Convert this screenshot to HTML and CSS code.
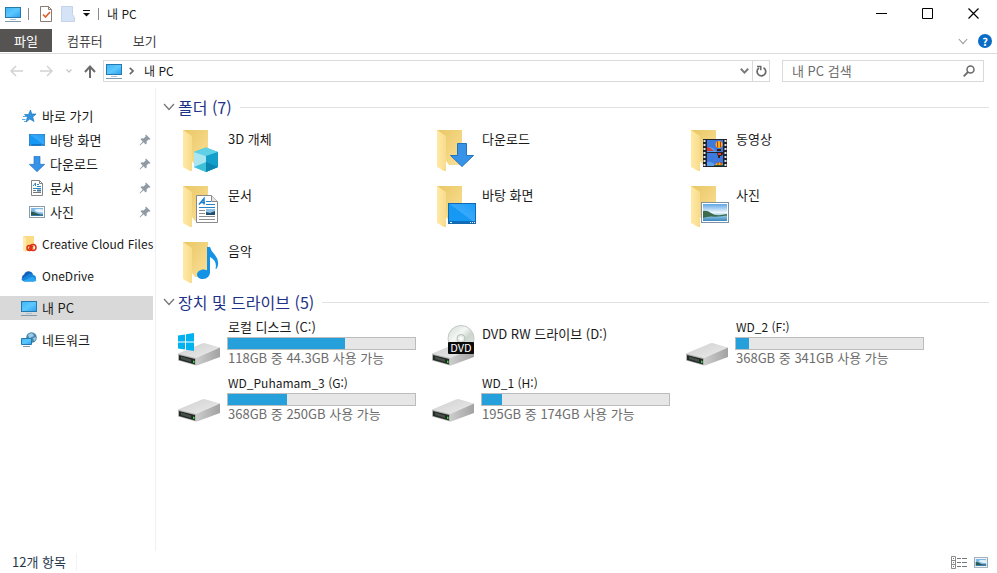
FILE: index.html
```html
<!DOCTYPE html>
<html lang="ko">
  <head>
    <meta charset="UTF-8" />
    <meta name="viewport" content="width=device-width, initial-scale=1.0" />
    <title>내 PC</title>
    <link rel="stylesheet" href="styles.css" />
  </head>
  <body>
    <!-- shared icons -->
    <svg class="sprite" aria-hidden="true">
      <defs>
        <linearGradient id="g-back" x1="0" y1="0" x2="1" y2="1">
          <stop offset="0" stop-color="#e9c765" />
          <stop offset="1" stop-color="#fbe097" />
        </linearGradient>
        <linearGradient id="g-flap" x1="0" y1="0" x2="1" y2="0">
          <stop offset="0" stop-color="#ffe9a6" />
          <stop offset="1" stop-color="#f8dc8c" />
        </linearGradient>
        <linearGradient id="g-screen" x1="0" y1="0" x2="1" y2="1">
          <stop offset="0" stop-color="#3fb4f5" />
          <stop offset="0.5" stop-color="#5cc8ff" />
          <stop offset="1" stop-color="#2ba0ee" />
        </linearGradient>
        <linearGradient id="g-desk" x1="0" y1="1" x2="1" y2="0">
          <stop offset="0" stop-color="#1698f5" />
          <stop offset="0.5" stop-color="#1698f5" />
          <stop offset="0.52" stop-color="#38a9fa" />
          <stop offset="1" stop-color="#1b9df8" />
        </linearGradient>
        <linearGradient id="g-sky" x1="0" y1="0" x2="0" y2="1">
          <stop offset="0" stop-color="#5fa6e6" />
          <stop offset="0.5" stop-color="#eef7fc" />
          <stop offset="0.7" stop-color="#8cc4e2" />
          <stop offset="1" stop-color="#3a86bd" />
        </linearGradient>
        <linearGradient id="g-top" x1="0" y1="0" x2="1" y2="1">
          <stop offset="0" stop-color="#cfcfcf" />
          <stop offset="1" stop-color="#ececec" />
        </linearGradient>
        <linearGradient id="g-side" x1="0" y1="0" x2="1" y2="0">
          <stop offset="0" stop-color="#cdcdcd" />
          <stop offset="1" stop-color="#a2a2a2" />
        </linearGradient>
        <linearGradient id="g-disc" x1="0" y1="0" x2="1" y2="1">
          <stop offset="0" stop-color="#d4dad5" />
          <stop offset="0.4" stop-color="#f4f7f4" />
          <stop offset="0.6" stop-color="#ccd5ce" />
          <stop offset="1" stop-color="#e5e9e6" />
        </linearGradient>
      </defs>
      <symbol id="pc" viewBox="0 0 16 16">
        <rect x="0.5" y="1.5" width="15" height="10" fill="url(#g-screen)" stroke="#2779ad" />
        <path d="M5 13.5h6" stroke="#a9c4d6" />
        <path d="M0 15.5h16" stroke="#7f99aa" />
      </symbol>
      <symbol id="folder" viewBox="0 0 48 48">
        <path d="M7 4h25v35H16z" fill="url(#g-back)" />
        <path d="M7 4l9 6v35l-2 0-7-4z" fill="url(#g-flap)" />
        <path d="M16 35l3 4h-3z" fill="#fff" />
      </symbol>
      <symbol id="drive" viewBox="0 0 48 48">
        <path d="M2 32.500L26 22.500Q28 21.500 30 22.500L44 26.500 20 37z" fill="url(#g-top)" />
        <path d="M20 37L44 26.500v9.500L21 44.500h-1z" fill="url(#g-side)" />
        <path d="M2 32.500l18 4.500v7.500L2 39.500z" fill="#b4b4b4" />
        <path d="M3 34l16 4v5.500L3 39z" fill="#232a26" />
        <path d="M5 35.500l10 3v2.500L5 38z" fill="#465049" />
        <path d="M17 39.500l1.500 .4v2.300l-1.500-.4z" fill="#3fd94a" />
      </symbol>
      <symbol id="arrow" viewBox="0 0 24 24">
        <path d="M7.500 .5h9v12h7L12 23.500.5 12.500h7z" fill="#3793e8" stroke="#2373bd" />
      </symbol>
      <symbol id="desk" viewBox="0 0 28 21">
        <rect x="0.500" y="0.500" width="27" height="20" fill="url(#g-desk)" stroke="#1269b0" />
        <path d="M1 19h26" stroke="#0e6ebb" stroke-width="2" />
        <path d="M2 19.500h2M22 19.500h1M24 19.500h1M26 19.500h1" stroke="#fff" />
      </symbol>
      <symbol id="photo" viewBox="0 0 28 21">
        <rect x="0.500" y="0.500" width="27" height="20" fill="#fff" stroke="#7d93a5" />
        <path d="M2 2h24v17H2z" fill="url(#g-sky)" />
        <path d="M2 9q4-1 8 2t10 2q4-.5 6-1v1.500q-8 1.500-16 1-5 0-8 1.500z" fill="#3a6b4b" />
      </symbol>
      <symbol id="photo-small" viewBox="0 0 16 12">
        <rect x="0.500" y="0.500" width="15" height="11" fill="#fff" stroke="#8a9bab" />
        <path d="M2 2h12v8H2z" fill="#7fb9e6" />
        <path d="M6 3.500q4-1 8 0v3q-5 0-8-1.500z" fill="#e8f4fb" />
        <path d="M2 5.500q3 0 5 1.500t7 1v.5q-4 .5-12 .5z" fill="#2c5a4e" />
        <path d="M2 9h12v1H2z" fill="#2f75a8" />
      </symbol>
      <symbol id="doc" viewBox="0 0 22 28">
        <path d="M.5 .5h15l6 6v21H.5z" fill="#fff" stroke="#8a8a8a" />
        <path d="M15.500 .5v6h6" fill="#e8e8e8" stroke="#8a8a8a" />
        <path d="M3 9.500l5-6v6M5 7.500h4" fill="none" stroke="#1b7fd0" stroke-width="1.500" />
        <path d="M10 6.500h5M10 9.500h9M3 12.500h16" stroke="#2b83c6" />
        <path d="M3 15.500h6M3 18.500h6M3 21.500h16M3 24.500h16" stroke="#8b8f93" />
        <path d="M10 14h9v6h-9z" fill="#8fc2e6" />
        <path d="M10 17l4 1 5-2v4h-9z" fill="#234f6c" />
      </symbol>
      <symbol id="pin" viewBox="0 0 12 12">
        <path d="M7 .5l4.500 4.500-1 .7-1-.3L7.500 7.500l.2 2-1 1L4.500 8.300 1 11.500.5 11l3.200-3.500L1.500 5.300l1-1 2 .2L6.700 2.400l-.4-1z" fill="#8f9aa5" />
      </symbol>
      <symbol id="chevron" viewBox="0 0 12 8">
        <path d="M1 1l5 5.500L11 1" fill="none" stroke="currentColor" stroke-width="1.300" />
      </symbol>
    </svg>

    <div class="window">
      <header class="titlebar">
        <svg class="icon16"><use href="#pc" /></svg>
        <span class="divider"></span>
        <div class="quick-tools">
          <button type="button" aria-label="속성">
            <svg width="14" height="16" viewBox="0 0 14 16">
              <path d="M1.500 .5h8l3 3v12h-11z" fill="#fff" stroke="#8b7b72" />
              <path d="M9.500 .5v3h3" fill="none" stroke="#8b7b72" />
              <path d="M4 8.500l2.500 2.500 4.500-5" fill="none" stroke="#e0622a" stroke-width="1.700" />
            </svg>
          </button>
          <button type="button" aria-label="새 폴더">
            <svg width="14" height="16" viewBox="0 0 14 16">
              <path d="M.5 .5h11v8l2 3v4H.5z" fill="#d5e3f7" stroke="#c4d3ea" />
            </svg>
          </button>
          <button type="button" class="customize" aria-label="빠른 실행 도구 모음 사용자 지정">
            <svg width="7" height="7" viewBox="0 0 7 7">
              <path d="M0 .5h7" stroke="#111" />
              <path d="M0 3h7L3.500 6.500z" fill="#111" />
            </svg>
          </button>
        </div>
        <span class="divider"></span>
        <h1>내 PC</h1>
        <div class="window-buttons">
          <button type="button" aria-label="최소화">
            <svg width="11" height="11"><path d="M0 5.500h11" stroke="#000" /></svg>
          </button>
          <button type="button" aria-label="최대화">
            <svg width="11" height="11"><path d="M.5 .5h10v10H.5z" fill="none" stroke="#000" /></svg>
          </button>
          <button type="button" aria-label="닫기">
            <svg width="11" height="11"><path d="M.5 .5l10 10M10.500 .5l-10 10" stroke="#000" stroke-width="1.200" /></svg>
          </button>
        </div>
      </header>

      <nav class="ribbon">
        <button type="button" class="tab file">파일</button>
        <button type="button" class="tab">컴퓨터</button>
        <button type="button" class="tab">보기</button>
        <div class="ribbon-end">
          <button type="button" aria-label="리본 확장">
            <svg class="expand"><use href="#chevron" /></svg>
          </button>
          <button type="button" class="help" aria-label="도움말">?</button>
        </div>
      </nav>

      <div class="toolbar">
        <div class="history">
          <button type="button" aria-label="뒤로" disabled>
            <svg width="13" height="12" viewBox="0 0 13 12"><path d="M13 6H1.500M6 1L1 6l5 5" fill="none" stroke="#d2d2d2" stroke-width="1.500" /></svg>
          </button>
          <button type="button" aria-label="앞으로" disabled>
            <svg width="13" height="12" viewBox="0 0 13 12"><path d="M0 6h11.500M7 1l5 5-5 5" fill="none" stroke="#d2d2d2" stroke-width="1.500" /></svg>
          </button>
          <button type="button" class="recent" aria-label="최근 위치" disabled>
            <svg width="6" height="4" viewBox="0 0 6 4"><path d="M.5 .5L3 3 5.500 .5" fill="none" stroke="#c8c8c8" stroke-width="1.300" /></svg>
          </button>
          <button type="button" aria-label="위로">
            <svg width="12" height="13" viewBox="0 0 12 13"><path d="M6 13V2M1 7l5-5.500L11 7" fill="none" stroke="#6b6b6b" stroke-width="2" /></svg>
          </button>
        </div>
        <div class="address">
          <svg class="icon16"><use href="#pc" /></svg>
          <svg width="5" height="8" viewBox="0 0 5 8"><path d="M.8 .8L4 4 .8 7.200" fill="none" stroke="#6a6a6a" stroke-width="1.700" /></svg>
          <button type="button" class="crumb">내 PC</button>
          <button type="button" class="drop" aria-label="이전 위치">
            <svg width="9" height="6" viewBox="0 0 9 6"><path d="M.8 .8L4.500 4.600 8.200 .8" fill="none" stroke="#7a7a7a" stroke-width="2" /></svg>
          </button>
          <button type="button" class="refresh" aria-label="새로 고침">
            <svg width="11" height="12" viewBox="0 0 11 12">
              <path d="M7.500 2.800A4.300 4.300 0 1 1 3 3" fill="none" stroke="#6a6a6a" stroke-width="1.700" />
              <path d="M1 1.500h3.800v3.800" fill="none" stroke="#6a6a6a" stroke-width="1.500" />
            </svg>
          </button>
        </div>
        <form class="search">
          <input type="text" aria-label="내 PC 검색" placeholder="내 PC 검색" />
          <button type="button" aria-label="검색">
            <svg width="12" height="12" viewBox="0 0 12 12">
              <circle cx="7.500" cy="4.500" r="3.500" fill="none" stroke="#6a6a6a" stroke-width="1.500" />
              <path d="M5 7L.7 11.300" stroke="#6a6a6a" stroke-width="1.800" />
            </svg>
          </button>
        </form>
      </div>

      <div class="body">
        <aside class="sidebar">
          <ul>
            <li>
              <a href="#">
                <svg class="icon16" viewBox="0 0 16 16">
                  <path d="M9.500 2l1.200 4H15l-3.300 3 1.300 4.500-4.200-2.500L5 14l1.300-4.500L3.500 6.500h4z" fill="#2f93e0" stroke="#2178bd" stroke-width=".7" />
                  <path d="M2 8.500h3.500M1 11.500h3.500M3 13.500h2" stroke="#55a9e6" />
                </svg>
                바로 가기
              </a>
            </li>
            <li class="child">
              <a href="#"><svg class="icon16"><use href="#desk" /></svg>바탕 화면<svg class="pin"><use href="#pin" /></svg></a>
            </li>
            <li class="child">
              <a href="#"><svg class="icon16"><use href="#arrow" /></svg>다운로드<svg class="pin"><use href="#pin" /></svg></a>
            </li>
            <li class="child">
              <a href="#">
                <svg class="icon16" viewBox="0 0 16 16">
                  <path d="M2.500 .5h8l3 3v12h-11z" fill="#fff" stroke="#858585" />
                  <path d="M10.500 .5v3h3" fill="none" stroke="#858585" />
                  <path d="M4 6l2.500-3v3M8 4.500h2M8 6.500h4M4 8.500h8" fill="none" stroke="#2b83c6" />
                  <path d="M4 10.500h3M4 12.500h8" stroke="#777" />
                  <path d="M8 9.500h4v2H8z" fill="#3f7aa5" />
                </svg>
                문서<svg class="pin"><use href="#pin" /></svg>
              </a>
            </li>
            <li class="child">
              <a href="#"><svg class="icon16"><use href="#photo-small" /></svg>사진<svg class="pin"><use href="#pin" /></svg></a>
            </li>
          </ul>
          <ul>
            <li>
              <a href="#" class="latin">
                <svg class="icon16" viewBox="0 0 16 16">
                  <path d="M2 0h11v15H2z" fill="#fbdb84" />
                  <path d="M2 0l3 2v14l-3-1z" fill="#ffe9ad" />
                  <circle cx="8.500" cy="12" r="2.500" fill="none" stroke="#e02f1b" stroke-width="1.500" />
                  <circle cx="12" cy="11.500" r="3" fill="none" stroke="#e02f1b" stroke-width="1.500" />
                  <path d="M7 13.800l5-3.800" stroke="#e02f1b" stroke-width="1.200" />
                </svg>
                Creative Cloud Files
              </a>
            </li>
          </ul>
          <ul>
            <li>
              <a href="#" class="latin">
                <svg class="icon16" viewBox="0 0 16 16">
                  <path d="M3.500 13a3.400 3.400 0 0 1-.3-6.500A4.800 4.800 0 0 1 12 6z" fill="#0f62ba" />
                  <path d="M3.500 13.500Q1 13 .3 11l7-4.500Q10 4.500 12.500 7a3.400 3.400 0 0 1 .3 6.500z" fill="#1684dc" />
                  <path d="M2 13l9.500-4.500 4 3.500q-.8 1.500-2.500 1.500H3.500z" fill="#2aa5ef" />
                </svg>
                OneDrive
              </a>
            </li>
          </ul>
          <ul>
            <li class="current">
              <a href="#"><svg class="icon16"><use href="#pc" /></svg>내 PC</a>
            </li>
          </ul>
          <ul>
            <li>
              <a href="#">
                <svg class="icon16" viewBox="0 0 16 16">
                  <circle cx="10.500" cy="5.500" r="5.300" fill="#4a86ae" />
                  <path d="M7 3q3-3 5-1t-1 3-2 3zM12 6l3-1q0 3-2 4z" fill="#9dcbe3" />
                  <path d="M.5 6.500h10v6H.5z" fill="url(#g-screen)" stroke="#2779ad" />
                  <path d="M2 14.500h7" stroke="#7f99aa" />
                </svg>
                네트워크
              </a>
            </li>
          </ul>
        </aside>

        <main class="content">
          <section>
            <h2><svg class="fold"><use href="#chevron" /></svg>폴더 (7)</h2>
            <ul class="tiles">
              <li class="tile">
                <svg class="icon48" viewBox="0 0 48 48">
                  <use href="#folder" />
                  <path d="M30 21.500L42 26v15l-12 5-12-5V26z" fill="#2cb8d9" />
                  <path d="M30 21.500L42 26l-12 4-12-4z" fill="#5fd0e6" />
                  <path d="M18 26l12 4v16l-12-5z" fill="#a9e6f0" />
                  <path d="M18 41l12-5v10z" fill="#3cc0d8" />
                  <path d="M30 30l12-4v15l-12 5z" fill="#139fca" />
                  <path d="M30 36l12 5-12 5z" fill="#0b86b1" />
                </svg>
                <div class="info"><a href="#">3D 개체</a></div>
              </li>
              <li class="tile">
                <svg class="icon48" viewBox="0 0 48 48">
                  <use href="#folder" />
                  <use href="#arrow" x="20" y="17" width="24" height="24" />
                </svg>
                <div class="info"><a href="#">다운로드</a></div>
              </li>
              <li class="tile">
                <svg class="icon48" viewBox="0 0 48 48">
                  <use href="#folder" />
                  <path d="M19 13h24v28H19z" fill="#20232c" />
                  <path d="M20.500 14v27M41.500 14v27" stroke="#e4e4e4" stroke-width="2" stroke-dasharray="2 2" />
                  <path d="M23 14h16v12H23zM23 27h16v13H23z" fill="#3d78dc" />
                  <path d="M23 22q5-2 8 2l2 2H23zM23 36q5-1 9 4h-9z" fill="#5aa0ed" />
                  <path d="M23 21l3 1 4 3h-7z" fill="#d5382e" />
                  <path d="M30 39h9v1h-9z" fill="#265936" />
                  <circle cx="35" cy="18.500" r="3.500" fill="#f1b41c" />
                  <path d="M33.500 15.500v6M36.500 15.500v6" stroke="#c23427" />
                  <path d="M33 23h4v2h-4z" fill="#34210f" />
                  <path d="M33 27h7l-3 3h-1v2h-2v-2z" fill="#34210f" />
                  <path d="M34 28h3" stroke="#e03b2c" stroke-width="2" />
                  <path d="M31 39a4.500 4.500 0 0 1 8 0z" fill="#f1b41c" />
                  <path d="M34 36v3M37 36v3" stroke="#c23427" />
                </svg>
                <div class="info"><a href="#">동영상</a></div>
              </li>
              <li class="tile">
                <svg class="icon48" viewBox="0 0 48 48">
                  <use href="#folder" />
                  <use href="#doc" x="20" y="13" width="22" height="28" />
                </svg>
                <div class="info"><a href="#">문서</a></div>
              </li>
              <li class="tile">
                <svg class="icon48" viewBox="0 0 48 48">
                  <use href="#folder" />
                  <use href="#desk" x="18" y="21" width="28" height="21" />
                </svg>
                <div class="info"><a href="#">바탕 화면</a></div>
              </li>
              <li class="tile">
                <svg class="icon48" viewBox="0 0 48 48">
                  <use href="#folder" />
                  <use href="#photo" x="17" y="20" width="28" height="21" />
                </svg>
                <div class="info"><a href="#">사진</a></div>
              </li>
              <li class="tile">
                <svg class="icon48" viewBox="0 0 48 48">
                  <use href="#folder" />
                  <path d="M31 9h3q1 4 5 8 5 6 2 13-.5 1-1.500 1 2-8-5.500-12v15c0 4-3 7-7 7s-6-2-6-4.500 3-5 6.500-5q2 0 3.500 .8z" fill="#1492e6" />
                </svg>
                <div class="info"><a href="#">음악</a></div>
              </li>
            </ul>
          </section>

          <section>
            <h2><svg class="fold"><use href="#chevron" /></svg>장치 및 드라이브 (5)</h2>
            <ul class="tiles">
              <li class="tile drive">
                <svg class="icon48" viewBox="0 0 48 48">
                  <use href="#drive" />
                  <path d="M2 14.500l7-1v7H2zM10 13.300l8-1.300v8.500h-8zM2 21.500h7v7l-7-1zM10 21.500h8V30l-8-1.300z" fill="#00b3f0" />
                </svg>
                <div class="info">
                  <a href="#">로컬 디스크 (C:)</a>
                  <div class="bar"><div style="width: 62.4%"></div></div>
                  <p>118GB 중 44.3GB 사용 가능</p>
                </div>
              </li>
              <li class="tile">
                <svg class="icon48" viewBox="0 0 48 48">
                  <use href="#drive" />
                  <circle cx="31" cy="17.500" r="13" fill="url(#g-disc)" stroke="#c3c9c4" />
                  <circle cx="31" cy="17.500" r="4" fill="#e9eeea" stroke="#b3bcb5" />
                  <circle cx="31" cy="17.500" r="1.500" fill="#fff" />
                  <rect x="18" y="21" width="26" height="12" rx="1" fill="#0b0b0b" />
                  <text class="disc-label" x="31" y="31" text-anchor="middle">DVD</text>
                </svg>
                <div class="info"><a href="#">DVD RW 드라이브 (D:)</a></div>
              </li>
              <li class="tile drive">
                <svg class="icon48"><use href="#drive" /></svg>
                <div class="info">
                  <a href="#" class="latin">WD_2 (F:)</a>
                  <div class="bar"><div style="width: 7%"></div></div>
                  <p>368GB 중 341GB 사용 가능</p>
                </div>
              </li>
              <li class="tile drive">
                <svg class="icon48"><use href="#drive" /></svg>
                <div class="info">
                  <a href="#" class="latin">WD_Puhamam_3 (G:)</a>
                  <div class="bar"><div style="width: 31.5%"></div></div>
                  <p>368GB 중 250GB 사용 가능</p>
                </div>
              </li>
              <li class="tile drive">
                <svg class="icon48"><use href="#drive" /></svg>
                <div class="info">
                  <a href="#" class="latin">WD_1 (H:)</a>
                  <div class="bar"><div style="width: 10.8%"></div></div>
                  <p>195GB 중 174GB 사용 가능</p>
                </div>
              </li>
            </ul>
          </section>
        </main>
      </div>

      <footer class="status">
        <span>12개 항목</span>
        <div class="views">
          <button type="button" aria-label="자세히">
            <svg width="16" height="13" viewBox="0 0 16 13">
              <path d="M.5 .5h4v12h-4zM.5 4.500h4M.5 8.500h4" fill="#fff" stroke="#8a8a8a" />
              <path d="M2 2.500h1M2 6.500h1M2 10.500h1M6 2.500h4M11 2.500h5M6 6.500h4M11 6.500h5M6 10.500h4M11 10.500h5" stroke="#777" />
            </svg>
          </button>
          <button type="button" aria-label="큰 아이콘">
            <svg width="14" height="11"><use href="#photo-small" /></svg>
          </button>
        </div>
      </footer>
    </div>
  </body>
</html>
```
FILE: styles.css
```css
* {
  margin: 0;
  padding: 0;
  box-sizing: border-box;
}

body {
  background-color: #fff;
  font-family: "Noto Sans CJK KR", sans-serif;
  font-size: 13px;
  line-height: 18px;
  color: #1a1a1a;
}

button,
input {
  border: 0;
  background: none;
  font: inherit;
  color: inherit;
}

button {
  display: flex;
  align-items: center;
  justify-content: center;
}

a {
  color: inherit;
  text-decoration: none;
}

ul {
  list-style: none;
}

svg {
  display: block;
  flex-shrink: 0;
}

.sprite {
  position: absolute;
  width: 0;
  height: 0;
}

.icon16 {
  width: 16px;
  height: 16px;
}

.icon48 {
  width: 48px;
  height: 48px;
}

.latin {
  font-size: 12px;
}

.window {
  display: flex;
  flex-direction: column;
  min-height: 100vh;
}

/* title bar */
.titlebar {
  display: flex;
  align-items: center;
  height: 27px;
  padding: 0 1px 0 5px;
}

.divider {
  width: 1px;
  height: 12px;
  margin: 0 8px 0 7px;
  background-color: #8a8a8a;
}

.quick-tools {
  display: flex;
  align-items: center;
  gap: 8px;
  padding: 0 1px 0 2px;
}

.customize {
  height: 16px;
}

.titlebar h1 {
  font-size: 12px;
  font-weight: normal;
}

.window-buttons {
  display: flex;
  margin-left: auto;
}

.window-buttons button {
  width: 46px;
  height: 26px;
}

/* ribbon tabs */
.ribbon {
  display: flex;
  height: 27px;
  padding-top: 2px;
  border-bottom: 1px solid #dadbdc;
}

.tab {
  height: 23px;
  padding: 0 15px;
  line-height: 16px;
  color: #444;
}

.tab.file {
  padding: 0 14px;
  background-color: #565452;
  color: #fff;
}

.ribbon-end {
  display: flex;
  align-items: center;
  gap: 10px;
  margin-left: auto;
  padding-right: 5px;
}

.expand {
  width: 10px;
  height: 7px;
  color: #999;
}

.help {
  width: 14px;
  height: 14px;
  border-radius: 50%;
  background-color: #0a6cc4;
  font-size: 11px;
  font-weight: bold;
  color: #fff;
}

/* navigation */
.toolbar {
  display: flex;
  align-items: center;
  height: 34px;
  padding: 0 13px 0 10px;
}

.history {
  display: flex;
  align-items: center;
  gap: 17px;
  width: 93px;
}

.recent {
  margin: 0 -5px 0 -4px;
}

.address {
  display: flex;
  flex: 1;
  align-items: center;
  gap: 7px;
  height: 22px;
  margin-right: 12px;
  padding-left: 2px;
  border: 1px solid #d9d9d9;
}

.crumb {
  margin-left: 3px;
  font-size: 12px;
}

.drop {
  margin-left: auto;
}

.refresh {
  width: 17px;
  height: 20px;
  margin-left: -4px;
  border-left: 1px solid #d9d9d9;
}

.search {
  display: flex;
  align-items: center;
  width: 202px;
  height: 22px;
  padding: 0 8px 0 9px;
  border: 1px solid #d9d9d9;
}

.search input {
  flex: 1;
  min-width: 0;
  outline: 0;
}

.search input::placeholder {
  color: #6d6d6d;
}

/* sidebar */
.body {
  display: flex;
  flex: 1;
}

.sidebar {
  display: flex;
  flex-direction: column;
  gap: 8px;
  width: 156px;
  padding-top: 16px;
  padding-right: 2px;
  border-right: 1px solid #f0f0f0;
}

.sidebar a {
  display: flex;
  align-items: center;
  gap: 5px;
  height: 24px;
  padding: 0 2px 0 21px;
  white-space: nowrap;
}

.sidebar .child a {
  padding-left: 29px;
}

.sidebar .current {
  background-color: #d9d9d9;
}

.pin {
  width: 12px;
  height: 12px;
  margin-left: auto;
}

/* content */
.content {
  flex: 1;
  padding: 7px 8px 0 7px;
}

h2 {
  display: flex;
  align-items: center;
  height: 24px;
  margin-bottom: 3px;
  font-size: 16px;
  font-weight: normal;
  color: #1e3287;
}

h2::after {
  content: "";
  flex: 1;
  height: 1px;
  margin-left: 8px;
  background-color: #e2e2e2;
}

.fold {
  width: 12px;
  height: 8px;
  margin-right: 3px;
  color: #777;
}

.tiles {
  display: grid;
  grid-template-columns: repeat(auto-fill, 254px);
  grid-auto-rows: 56px;
  padding-left: 13px;
}

.tile {
  display: flex;
  gap: 3px;
  padding-top: 4px;
}

.info {
  width: 189px;
  padding-top: 4px;
}

.info a,
.info p {
  display: block;
  padding-left: 1px;
}

.info p {
  color: #6d6d6d;
}

.drive .info {
  margin-top: -4px;
  padding-top: 2px;
  line-height: 16px;
}

.bar {
  height: 13px;
  margin-top: 2px;
  border: 1px solid #bcbcbc;
  background-color: #e6e6e6;
}

.bar div {
  height: 100%;
  background-color: #26a0da;
}

.disc-label {
  font-size: 11px;
  fill: #fff;
}

/* status bar */
.status {
  display: flex;
  align-items: center;
  justify-content: space-between;
  height: 22px;
  padding: 0 9px 0 12px;
  color: #26384d;
}

.status span {
  padding-right: 10px;
  border-right: 1px solid #f3f3f3;
}

.views {
  display: flex;
  align-items: center;
  gap: 7px;
}
```
